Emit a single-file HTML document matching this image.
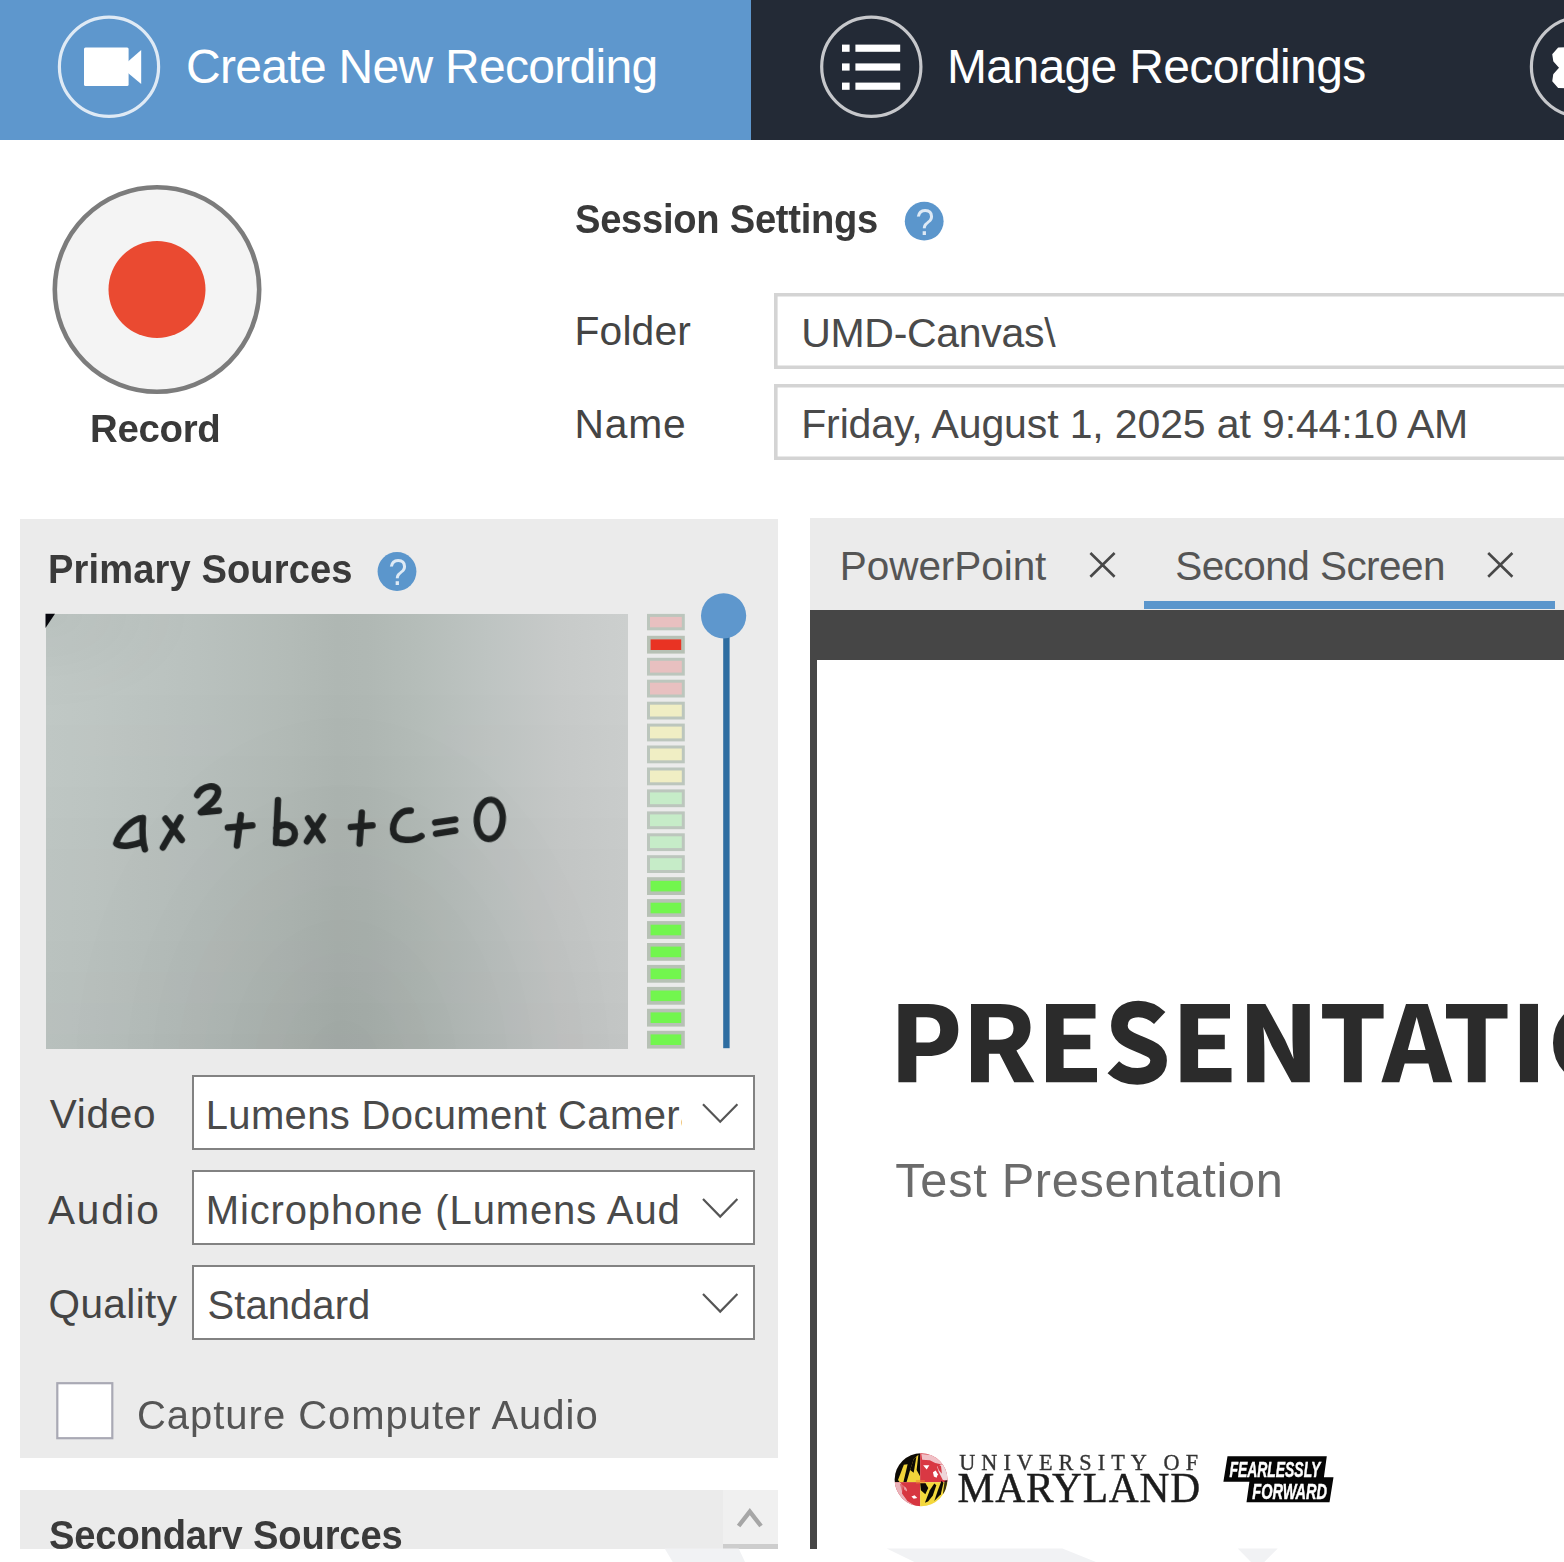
<!DOCTYPE html>
<html><head><meta charset="utf-8">
<style>
html,body{margin:0;padding:0;background:#fff;}
body{width:1564px;height:1562px;overflow:hidden;position:relative;font-family:"Liberation Sans",sans-serif;}
.a{position:absolute;}
.t{position:absolute;white-space:nowrap;line-height:1;}
svg{position:absolute;left:0;top:0;overflow:visible;}

.sb{font-weight:bold;letter-spacing:-.6px;transform:scaleX(.93);transform-origin:0 0;}
.q{width:40px;text-align:center;color:rgba(255,255,255,.8);font-size:37.5px;line-height:36px;transform:scaleX(.9);}
.inp{box-sizing:border-box;background:#fff;box-shadow:inset 0 0 0 3.6px #d4d4d4;}

.lb{font-size:40.5px;color:#444;letter-spacing:-.6px;}
.dd{left:191.5px;width:563.5px;height:75.5px;box-sizing:border-box;border:2.6px solid #828282;background:#fff;overflow:hidden;}
.dt{left:15px;top:18px;font-size:40px;color:#4a4a4a;width:476.3px;overflow:hidden;}
</style></head><body>
<!-- HEADER -->
<div class="a" id="hdrBlue" style="left:0;top:0;width:751px;height:140.3px;background:#5e97cd;"></div>
<div class="a" id="hdrDark" style="left:751px;top:0;width:813px;height:140.3px;background:#232a36;"></div>
<svg width="1564" height="140" viewBox="0 0 1564 140">
  <circle cx="109" cy="66.8" r="49.6" fill="none" stroke="#fff" stroke-opacity=".8" stroke-width="3.2" style="filter:blur(.5px)"/>
  <rect x="84" y="47.6" width="44.6" height="38.4" rx="1.5" fill="#fff"/>
  <polygon points="128,61.5 141.2,50 141.2,84 128,73" fill="#fff"/>
  <circle cx="871.3" cy="66.8" r="49.6" fill="none" stroke="#fff" stroke-opacity=".74" stroke-width="3.2" style="filter:blur(.5px)"/>
  <g fill="#fff">
    <rect x="842" y="44.6" width="7.6" height="7.2"/><rect x="855.4" y="44.6" width="44.8" height="7.2"/>
    <rect x="842" y="63.4" width="7.6" height="7.2"/><rect x="855.4" y="63.4" width="44.8" height="7.2"/>
    <rect x="842" y="82.6" width="7.6" height="7.2"/><rect x="855.4" y="82.6" width="44.8" height="7.2"/>
  </g>
  <circle cx="1581" cy="66.8" r="49.6" fill="none" stroke="#fff" stroke-opacity=".74" stroke-width="3.2" style="filter:blur(.5px)"/>
  <polygon points="1570,47.8 1558.5,48.2 1553,54.5 1554,61 1560,67.7 1554,74.4 1553,81 1558.5,87.2 1570,87.6" fill="#fff" stroke="#fff" stroke-width="1.5" stroke-linejoin="round" style="filter:blur(.5px)"/>
</svg>
<div class="t" id="tCreate" style="left:186px;top:43px;font-size:48px;color:#fff;letter-spacing:-0.7px;">Create New Recording</div>
<div class="t" id="tManage" style="left:947px;top:43px;font-size:48px;color:#fff;letter-spacing:-0.65px;">Manage Recordings</div>

<!-- RECORD BUTTON -->
<svg width="400" height="480" viewBox="0 0 400 480">
  <circle cx="157" cy="289.5" r="102.2" fill="#f4f4f4" stroke="#7c7c7c" stroke-width="4.6"/>
  <circle cx="157" cy="289.5" r="48.5" fill="#ea4a31"/>
</svg>
<div class="t sb" id="tRecord" style="left:90px;top:409px;font-size:39.5px;color:#393939;transform:scaleX(.972);letter-spacing:-0.3px;">Record</div>

<!-- SESSION SETTINGS -->
<div class="t sb" id="tSession" style="left:574.6px;top:198.9px;font-size:41px;color:#393939;letter-spacing:-0.28px;">Session Settings</div>
<svg width="1564" height="700" viewBox="0 0 1564 700">
  <circle cx="924.2" cy="221.2" r="19.4" fill="#5b96cc"/>
</svg>
<div class="t q" style="left:904.6px;top:203.6px;">?</div>
<div class="t" id="tFolder" style="left:574.5px;top:310.8px;font-size:40.8px;color:#444;letter-spacing:0.14px;">Folder</div>
<div class="t" id="tName" style="left:574.5px;top:403.7px;font-size:40.8px;color:#444;letter-spacing:0.77px;">Name</div>
<div class="a inp" style="left:774px;top:293px;width:900px;height:76px;"></div>
<div class="a inp" style="left:774px;top:384px;width:900px;height:76px;"></div>
<div class="t" id="tUMD" style="left:801.2px;top:312.5px;font-size:41px;color:#4a4a4a;letter-spacing:-0.3px;">UMD-Canvas\</div>
<div class="t" id="tFriday" style="left:801.2px;top:404px;font-size:41px;color:#4a4a4a;letter-spacing:-0.13px;">Friday, August 1, 2025 at 9:44:10 AM</div>

<!-- PRIMARY SOURCES PANEL -->
<div class="a" style="left:20px;top:519px;width:758px;height:939px;background:#ebebeb;"></div>
<div class="t sb" id="tPrimary" style="left:48.3px;top:549.3px;font-size:41px;color:#3a3a3a;letter-spacing:0.11px;">Primary Sources</div>
<svg width="800" height="700" viewBox="0 0 800 700"><circle cx="397" cy="571.5" r="19.4" fill="#5b96cc"/></svg>
<div class="t q" style="left:377.6px;top:554px;">?</div>
<div class="a" id="preview" style="left:45.5px;top:613.8px;width:582.2px;height:434.8px;background:radial-gradient(ellipse 25% 22% at 0% 0%,rgba(0,0,0,.04),rgba(0,0,0,0)),radial-gradient(ellipse 48% 85% at 51% 105%,rgba(0,0,0,.045),rgba(0,0,0,0)),linear-gradient(180deg,rgba(0,0,0,0) 15%,rgba(0,0,0,.048) 100%),linear-gradient(90deg,rgb(193,201,198) 0%,rgb(191,199,196) 8%,rgb(185,193,190) 26%,rgb(179,187,183) 42%,rgb(175,183,179) 50%,rgb(176,184,180) 55%,rgb(181,189,185) 64%,rgb(190,196,194) 76%,rgb(199,202,201) 88%,rgb(203,206,205) 97%,rgb(204,207,206) 100%);"></div>
<svg width="800" height="1100" viewBox="0 0 800 1100">
  <polygon points="45.5,613.8 55,613.8 45.5,628" fill="#08080e" style="filter:blur(.6px)"/>
  <g id="eq" transform="translate(90,760) scale(0.28134)" fill="none" stroke="#1e2121" stroke-width="23" stroke-linecap="round" stroke-linejoin="round" style="filter:blur(.5px)">
    <path d="M187,206 C152,206 102,258 93,297 C112,312 160,302 184,292"/>
    <path d="M188,206 C185,250 187,295 195,317"/>
    <path d="M268,208 L326,284"/><path d="M321,204 L259,311"/>
    <path d="M381,125 C400,88 452,84 455,112 C455,142 412,168 394,186 L458,180"/>
    <path d="M490,240 L577,232"/><path d="M536,196 L522,304"/>
    <path d="M668,142 L661,294"/><path d="M663,242 C700,214 737,240 726,275 C716,300 682,300 662,290"/>
    <path d="M775,207 L826,285"/><path d="M828,201 L771,289"/>
    <path d="M927,238 L1004,232"/><path d="M966,187 L958,297"/>
    <path d="M1140,180 C1100,174 1070,220 1079,260 C1090,290 1150,290 1178,270"/>
    <path d="M1227,222 L1298,212"/><path d="M1230,262 L1298,251"/>
    <ellipse cx="1421" cy="211" rx="46" ry="70" transform="rotate(4 1421 211)"/>
  </g>
    <rect x="648.5" y="615.4" width="34.8" height="13.4" fill="#e8c0c0" stroke="#bcc6bd" stroke-width="3.0"/>
  <rect x="648.8" y="637.6" width="34.2" height="14.2" fill="#e93323" stroke="#b7c1b5" stroke-width="3.6"/>
  <rect x="648.5" y="659.3" width="34.8" height="14.8" fill="#e8c0c0" stroke="#bcc6bd" stroke-width="3.0"/>
  <rect x="648.5" y="681.2" width="34.8" height="14.8" fill="#e8c0c0" stroke="#bcc6bd" stroke-width="3.0"/>
  <rect x="648.5" y="703.2" width="34.8" height="14.8" fill="#f0eec4" stroke="#bcc6bd" stroke-width="3.0"/>
  <rect x="648.5" y="725.1" width="34.8" height="14.8" fill="#f0eec4" stroke="#bcc6bd" stroke-width="3.0"/>
  <rect x="648.5" y="747.0" width="34.8" height="14.8" fill="#f0eec4" stroke="#bcc6bd" stroke-width="3.0"/>
  <rect x="648.5" y="769.0" width="34.8" height="14.8" fill="#f0eec4" stroke="#bcc6bd" stroke-width="3.0"/>
  <rect x="648.5" y="790.9" width="34.8" height="14.8" fill="#c6ecc8" stroke="#bcc6bd" stroke-width="3.0"/>
  <rect x="648.5" y="812.9" width="34.8" height="14.8" fill="#c6ecc8" stroke="#bcc6bd" stroke-width="3.0"/>
  <rect x="648.5" y="834.8" width="34.8" height="14.8" fill="#c6ecc8" stroke="#bcc6bd" stroke-width="3.0"/>
  <rect x="648.5" y="856.7" width="34.8" height="14.8" fill="#c6ecc8" stroke="#bcc6bd" stroke-width="3.0"/>
  <rect x="648.8" y="879.0" width="34.2" height="14.2" fill="#72f64e" stroke="#b7c1b5" stroke-width="3.6"/>
  <rect x="648.8" y="900.9" width="34.2" height="14.2" fill="#72f64e" stroke="#b7c1b5" stroke-width="3.6"/>
  <rect x="648.8" y="922.9" width="34.2" height="14.2" fill="#72f64e" stroke="#b7c1b5" stroke-width="3.6"/>
  <rect x="648.8" y="944.8" width="34.2" height="14.2" fill="#72f64e" stroke="#b7c1b5" stroke-width="3.6"/>
  <rect x="648.8" y="966.7" width="34.2" height="14.2" fill="#72f64e" stroke="#b7c1b5" stroke-width="3.6"/>
  <rect x="648.8" y="988.7" width="34.2" height="14.2" fill="#72f64e" stroke="#b7c1b5" stroke-width="3.6"/>
  <rect x="648.8" y="1010.6" width="34.2" height="14.2" fill="#72f64e" stroke="#b7c1b5" stroke-width="3.6"/>
  <rect x="648.8" y="1032.6" width="34.2" height="14.2" fill="#72f64e" stroke="#b7c1b5" stroke-width="3.6"/>
  <rect x="723.2" y="620" width="6.4" height="428.2" fill="#2e6da1"/>
  <circle cx="723.6" cy="615.8" r="22.6" fill="#5e97cd"/>
</svg>

<!-- DROPDOWNS -->
<div class="t lb" id="tVideo" style="left:49.8px;top:1094px;letter-spacing:0.75px;">Video</div>
<div class="t lb" id="tAudio" style="left:47.9px;top:1189.5px;letter-spacing:1.85px;">Audio</div>
<div class="t lb" id="tQuality" style="left:48.5px;top:1284px;letter-spacing:0.4px;">Quality</div>
<div class="a dd" style="top:1074.5px;"><div class="t dt" id="tLumens" style="left:12.2px;letter-spacing:0.35px;">Lumens Document Camera</div></div>
<div class="a dd" style="top:1169.5px;"><div class="t dt" id="tMic" style="left:12.2px;letter-spacing:0.87px;">Microphone (Lumens Audio</div></div>
<div class="a dd" style="top:1264.5px;"><div class="t dt" id="tStd" style="left:14px;letter-spacing:0.06px;">Standard</div></div>
<svg width="800" height="1562" viewBox="0 0 800 1562" fill="none" stroke="#555" stroke-width="2.2">
  <polyline points="703,1104.2 720.2,1121.8 737.4,1104.2"/>
  <polyline points="703,1199 720.2,1216.6 737.4,1199"/>
  <polyline points="703,1294 720.2,1311.6 737.4,1294"/>
  <rect x="57.3" y="1383.2" width="55" height="55" fill="#fff" stroke="#a9a9b4" stroke-width="2.2"/>
</svg>
<div class="t" id="tCapture" style="left:137px;top:1394.5px;font-size:40px;color:#555;letter-spacing:0.97px;">Capture Computer Audio</div>

<!-- SECONDARY SOURCES -->
<div class="a" style="left:20px;top:1490.4px;width:758px;height:58.2px;background:#ebebeb;overflow:hidden;">
  <div class="t sb" id="tSecondary" style="left:29.3px;top:24.6px;font-size:41px;color:#3a3a3a;letter-spacing:-0.16px;">Secondary Sources</div>
</div>
<div class="a" style="left:723.3px;top:1490.4px;width:55px;height:54.2px;background:#f0f0f0;"></div>
<div class="a" style="left:723.3px;top:1544.4px;width:55px;height:4.2px;background:#cdcdcd;"></div>
<svg width="800" height="1562" viewBox="0 0 800 1562" fill="none" stroke="#a6a6a6" stroke-width="4.4">
  <polyline points="738.6,1526 749.8,1511.6 761,1526"/>
</svg>

<!-- RIGHT PANEL -->
<div class="a" style="left:810px;top:518px;width:754px;height:91.5px;background:#ebebeb;"></div>
<div class="t" id="tPP" style="left:839.8px;top:545.5px;font-size:40.5px;color:#555;letter-spacing:-0.06px;">PowerPoint</div>
<div class="t" id="tSS" style="left:1175.2px;top:545.5px;font-size:40.5px;color:#555;letter-spacing:-0.55px;">Second Screen</div>
<div class="a" style="left:1144.2px;top:600.8px;width:410.6px;height:8.7px;background:#5b96cc;"></div>
<div class="a" style="left:810px;top:609.5px;width:754px;height:50.3px;background:#464646;"></div>
<div class="a" style="left:810px;top:609.5px;width:6.5px;height:939.1px;background:#464646;"></div>
<svg width="1564" height="700" viewBox="0 0 1564 700" fill="none" stroke="#484848" stroke-width="2.6">
  <path d="M1090.4,553 L1114.6,576.8 M1114.6,553 L1090.4,576.8"/>
  <path d="M1488.2,553 L1512.4,576.8 M1512.4,553 L1488.2,576.8"/>
</svg>
<div class="a" id="slide" style="left:816.5px;top:659.8px;width:760px;height:888.8px;overflow:hidden;">
  <div class="t" id="tTest" style="left:78.8px;top:496px;font-size:48.7px;color:#6b6b6b;letter-spacing:0.71px;">Test Presentation</div>
</div>

<svg id="pres" width="1564" height="1562" viewBox="0 0 1564 1562">
 <g fill="#2b2b2b" fill-rule="evenodd">
  <path transform="translate(898.4,1003.9)" d="M0,0 H30 C50,0 59.9,9 59.9,25.6 C59.9,43 48,52.1 30,52.1 H17.9 V78.3 H0 Z M17.9,13.4 V38.7 H28 C37,38.7 41.8,34 41.8,26 C41.8,17.5 37,13.4 28,13.4 Z"/>
  <path transform="translate(971,1003.9)" d="M0,0 H29 C49,0 59.5,8 59.5,23.5 C59.5,34 54,42 45.4,46.5 L63.3,78.3 H43.2 L28.6,49.9 H17.9 V78.3 H0 Z M17.9,13.4 V35.8 H28 C37.5,35.8 42.5,32 42.5,24.6 C42.5,17 37.5,13.4 28,13.4 Z"/>
  <path transform="translate(1046,1003.9)" d="M0,0 H49.5 V14.5 H17.6 V30.9 H44.3 V45.4 H17.6 V64 H51 V78.3 H0 Z"/>
  <path transform="translate(1180.5,1003.9)" d="M0,0 H49.5 V14.5 H17.6 V30.9 H44.3 V45.4 H17.6 V64 H51 V78.3 H0 Z"/>
  <path transform="translate(1247.1,1003.9)" d="M0,0 H18.3 L38,36 L46.5,55 C45.6,46 45.4,38 45.4,30 V0 H62.7 V78.3 H44.4 L24.6,42 L16.2,23 C17,32 17.3,40 17.3,48 V78.3 H0 Z"/>
  <path transform="translate(1322.1,1003.9)" d="M0,0 H61.5 V14.5 H39.7 V78.3 H21.8 V14.5 H0 Z"/>
  <path transform="translate(1381.4,1003.9)" d="M24.6,0 H46.3 L70.9,78.3 H51.9 L47,59.5 H23.3 L17.9,78.3 H0 Z M35.3,13 L26.4,46.1 H44.2 Z"/>
  <path transform="translate(1446,1003.9)" d="M0,0 H61.5 V14.5 H39.7 V78.3 H21.8 V14.5 H0 Z"/>
  <rect x="1519.9" y="1003.9" width="18.1" height="78.3"/>
 </g>
 <path transform="translate(1108.2,1003.9)" fill="none" stroke="#2b2b2b" stroke-width="16.6" d="M51.5,14.1 C45,8 38,5.1 30.2,5.1 C18,5.1 11.2,12 11.2,21.9 C11.2,31 18,35 30.2,39.8 C43,45 50.4,48 50.4,56.6 C50.4,66 42,72.5 29.1,72.5 C20,72.5 11,69 5.1,63.3"/>
 <ellipse cx="1592" cy="1043" rx="30.2" ry="32.6" fill="none" stroke="#2b2b2b" stroke-width="17.6"/>
</svg>

<!-- LOGOS -->
<svg id="logos" width="1564" height="1562" viewBox="0 0 1564 1562">
 <defs><clipPath id="gc"><circle cx="805" cy="775" r="590"/></clipPath></defs>
 <g transform="translate(885,1445) scale(0.044823)" style="filter:blur(15px)">
  <g clip-path="url(#gc)">
   <rect x="0" y="0" width="1562" height="1562" fill="#f3e9ea"/>
   <rect x="200" y="170" width="585" height="660" fill="#0d0a05"/>
   <polygon points="290,780 420,440 505,430 410,830 330,830" fill="#f2d43a"/>
   <polygon points="480,830 560,560 640,310 745,215 705,560 785,700 785,830" fill="#f2d43a"/>
   <polygon points="560,560 640,310 700,260 640,620" fill="#0d0a05"/>
   <rect x="785" y="170" width="640" height="660" fill="#d93843"/>
   <polygon points="810,200 1100,230 1250,330 1290,440 1120,400 1000,340 830,330" fill="#f0c0c6"/>
   <polygon points="850,450 990,450 930,545" fill="#fff"/>
   <polygon points="1070,610 1130,570 1180,650 1150,730 1090,700" fill="#fff"/>
   <polygon points="1230,440 1420,420 1420,800 1290,780 1200,600 1160,480" fill="#eed6da"/>
   <polygon points="1150,420 1250,470 1270,640 1200,560" fill="#d93843"/>
   <rect x="200" y="830" width="585" height="560" fill="#d73640"/>
   <polygon points="200,830 330,830 400,900 380,1080 500,1250 640,1340 400,1400 200,1100" fill="#eab4bb"/>
   <polygon points="405,900 470,960 490,1040 430,1000" fill="#fff"/>
   <polygon points="590,1150 660,1120 720,1180 640,1200" fill="#fff"/>
   <polygon points="330,870 440,860 470,1000 560,1150 520,1250 400,1100" fill="#d73640" opacity=".55"/>
   <rect x="785" y="830" width="640" height="560" fill="#f4d83c"/>
   <polygon points="785,850 900,850 965,960 900,1100 800,1010" fill="#0d0a05"/>
   <polygon points="1000,1010 1100,860 1145,900 1065,1130 960,1260 890,1290" fill="#0d0a05"/>
   <polygon points="1180,1010 1260,800 1305,840 1245,1100 1100,1250" fill="#0d0a05"/>
   <polygon points="1330,800 1400,780 1340,1060 1290,1100" fill="#0d0a05" opacity=".8"/>
   <rect x="690" y="780" width="200" height="80" fill="#ef8b2c" opacity=".55"/>
  </g>
 </g>
 <g style="filter:blur(.6px)" font-family="Liberation Serif, serif" fill="#1c1c1c" stroke="#1c1c1c" stroke-width=".45">
  <text x="959.3" y="1470.4" font-size="22.2" textLength="238.7" lengthAdjust="spacing" fill="#333" stroke="#333" stroke-width=".35">UNIVERSITY OF</text>
  <text x="957.6" y="1502.1" font-size="41.4" textLength="242.6" lengthAdjust="spacing">MARYLAND</text>
 </g>
 <g style="filter:blur(.5px)">
  <polygon points="1227.5,1456.2 1326.8,1456.2 1323.9,1477.2 1333.5,1477.2 1329.5,1502.3 1246.5,1502.3 1249.4,1481.7 1223.4,1481.7" fill="#050505"/>
  <g font-family="Liberation Sans, sans-serif" font-weight="bold" font-style="italic" fill="#fff" stroke="#fff" stroke-width=".5" font-size="22.4">
   <text x="1229.4" y="1477.1" textLength="91" lengthAdjust="spacingAndGlyphs">FEARLESSLY</text>
   <text x="1252.3" y="1498.6" textLength="74.8" lengthAdjust="spacingAndGlyphs">FORWARD</text>
  </g>
 </g>
</svg>
<!-- bottom strip shapes -->
<svg width="1564" height="1562" viewBox="0 0 1564 1562">
  <g fill="#f1f2f4">
    <polygon points="664.7,1548.6 738.7,1548.6 745,1562 672.7,1562"/>
    <polygon points="886.7,1548.6 1062.4,1548.6 1096,1562 914.4,1562"/>
    <polygon points="1237.7,1548.6 1277.8,1548.6 1264.3,1562 1251,1562"/>
  </g>
</svg>
</body></html>
